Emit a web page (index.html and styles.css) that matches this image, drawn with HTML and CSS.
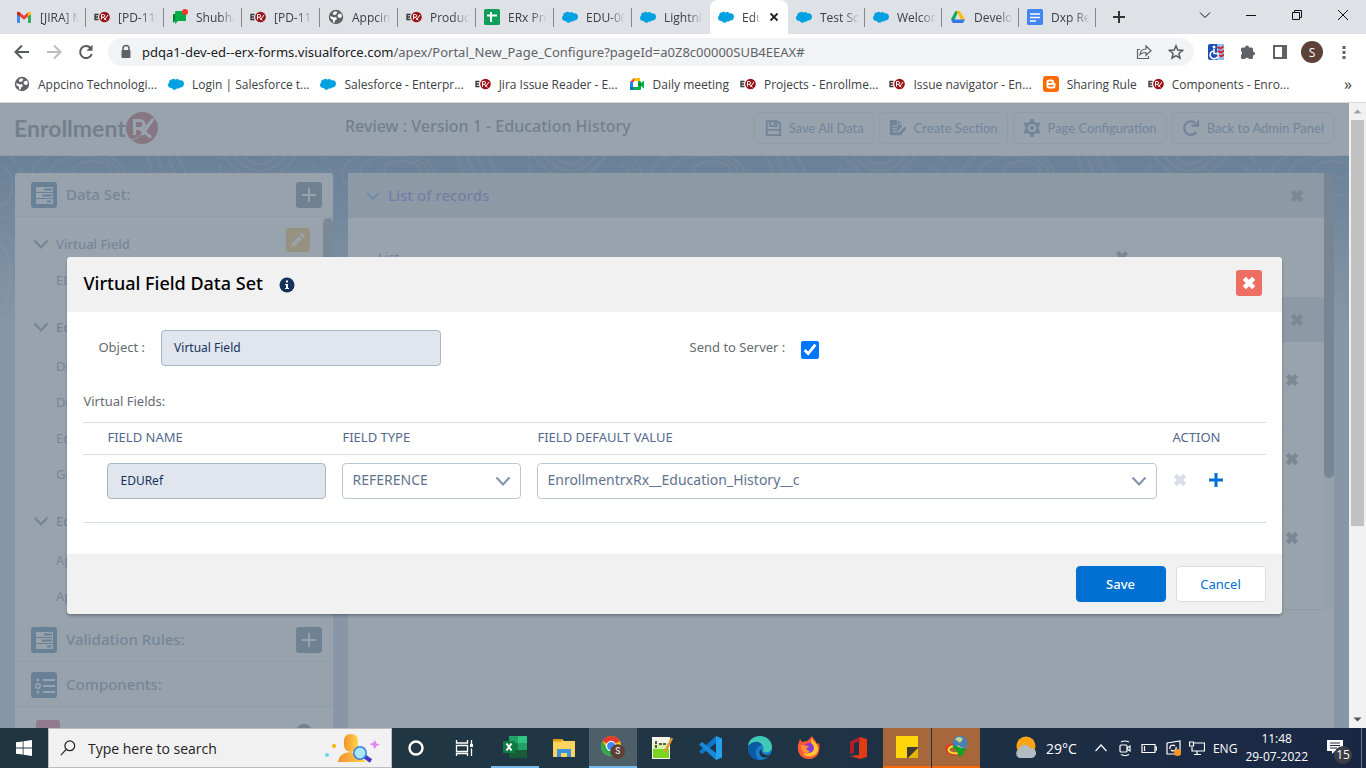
FILE: index.html
```html
<!DOCTYPE html>
<html lang="en">

<head>
    <meta charset="UTF-8" />
    <title>Education History</title>
    <link rel="stylesheet" href="styles.css">
</head>

<body>
    <!-- shared icons -->
    <svg class="sprite" aria-hidden="true">
        <symbol id="i-cloud" viewBox="0 0 16 16">
            <path fill="#00a1e0" d="M3.9 3.6C5 2.4 6.700 2.700 7.400 3.700 8.900 2.300 11 3 11.600 4.500 14 3.700 16 5.400 16 7.800s-2 4-4.200 3.600c-.8 1.300-2.200 1.400-3.100 1-.9 1.800-4 1.800-4.900-.3C1.800 12.300 0 11 0 9.100c0-1.100.6-2 1.300-2.500C.8 5.200 2 3.400 3.900 3.600z" />
        </symbol>
        <symbol id="i-erx" viewBox="0 0 16 16">
            <path d="M4.500 5.500H1v5h3.500M1 8h3" fill="none" stroke="#333" stroke-width="1.300" />
            <circle cx="10.500" cy="8" r="5.300" fill="#9b1419" />
            <path d="M7.500 10.500v-5h1.800a1.300 1.300 0 0 1 0 2.700H7.500m1.500 0 3.500 3M14 6 10.500 10.800" fill="none" stroke="#fff" stroke-width="1" />
        </symbol>
        <symbol id="i-globe" viewBox="0 0 16 16">
            <circle cx="8" cy="8" r="7.200" fill="#5f6368" />
            <path fill="#fff" d="M2.500 7 6 8.500 8 8l1 2-2 1.500-.5 2.200-1.500-.5V11L2.300 9zM7 2.200 9.500 3 8 5.500 5.500 6 4.800 4zM10 5.500l3-1 1 3-1.500 1.500-2-.5-1-1.500z" />
        </symbol>
        <symbol id="i-gmail" viewBox="0 0 16 16">
            <path fill="#4285f4" d="M1 4.500V13a1 1 0 0 0 1 1h2V6.500z" />
            <path fill="#34a853" d="M12 6.500V14h2a1 1 0 0 0 1-1V4.500z" />
            <path fill="#ea4335" d="M4 3.600 8 6.700l4-3.100v4L8 10.700 4 7.600z" />
            <path fill="#c5221f" d="M1 4.200C1 2.700 2.600 2.400 4 3.600v4L1 5.400z" />
            <path fill="#fbbc04" d="M15 4.200c0-1.500-1.600-1.800-3-.6v4l3-2.200z" />
        </symbol>
        <symbol id="i-chat" viewBox="0 0 16 16">
            <path fill="#00832d" d="M1 5h5v6H4L1 14z" />
            <path fill="#00ac47" d="M4 2h10v10H6l-3 3V3a1 1 0 0 1 1-1z" />
            <circle cx="13" cy="3" r="3" fill="#f0372d" />
        </symbol>
        <symbol id="i-sheets" viewBox="0 0 16 16">
            <rect width="16" height="16" rx="1.500" fill="#0f9d58" />
            <path d="M7 3v10M3 6.500h10" stroke="#fff" stroke-width="2" />
        </symbol>
        <symbol id="i-drive" viewBox="0 0 16 16">
            <path fill="#0fa958" d="M5.500 2h3L3.800 12.500 1 10z" />
            <path fill="#ffba00" d="M6.500 2h3.200L15 10.500h-4z" />
            <path fill="#3777e3" d="M3.500 10.500H15L13 14H2.800L1 10.800z" />
        </symbol>
        <symbol id="i-docs" viewBox="0 0 16 16">
            <rect width="16" height="16" rx="1.500" fill="#4285f4" />
            <path d="M3 5h10M3 8.500h10M3 12h6" stroke="#fff" stroke-width="1.600" />
        </symbol>
        <symbol id="i-meet" viewBox="0 0 16 16">
            <path fill="#fbbc04" d="M5 2h6v3H5z" />
            <path fill="#ea4335" d="M1 6l4-4v4z" />
            <path fill="#2684fc" d="M1 6h3v5H1z" />
            <path fill="#0066da" d="M1 11h3v3H2a1 1 0 0 1-1-1z" />
            <path fill="#00ac47" d="M4 11h5V5h2a1 1 0 0 1 1 1v1l3-2.500v8L12 10v3a1 1 0 0 1-1 1H4z" />
            <path fill="#00832d" d="m12 6.500-3 2 3 2z" />
        </symbol>
        <symbol id="i-blogger" viewBox="0 0 16 16">
            <rect width="16" height="16" rx="3" fill="#ff6a00" />
            <path fill="#fff" d="M3.500 6A2.500 2.500 0 0 1 6 3.500h2.500A2.500 2.500 0 0 1 11 6c0 1 .3 1.200 1.500 1.300v2.700a2.500 2.500 0 0 1-2.500 2.500H6A2.500 2.500 0 0 1 3.500 10z" />
            <path d="M6 6.300h2.300M6 9.700h4" stroke="#ff6a00" stroke-width="1.400" stroke-linecap="round" />
        </symbol>
        <symbol id="i-x" viewBox="0 0 12 12">
            <path d="M2 2l8 8M10 2l-8 8" stroke="currentColor" stroke-width="3.800" />
        </symbol>
        <symbol id="i-chev" viewBox="0 0 16 16">
            <path d="M1.500 4.500 8 11.500l6.500-7" fill="none" stroke="currentColor" stroke-width="2.200" />
        </symbol>
        <symbol id="i-server" viewBox="0 0 26 26">
            <rect width="26" height="26" rx="3" fill="#16588e" />
            <path d="M5 7.500h17M5 13.500h17M5 19.500h17" stroke="#fff" stroke-width="5" />
            <path d="M13 7.500h8M11 13.500h10M16 19.500h4" stroke="#16588e" stroke-width="2" />
        </symbol>
        <symbol id="i-plus" viewBox="0 0 26 26">
            <rect width="26" height="26" rx="3" fill="#3b5578" />
            <path d="M13 6v14M6 13h14" stroke="#fff" stroke-width="2" />
        </symbol>
    </svg>

    <div class="tabstrip">
        <div class="tab"><svg><use href="#i-gmail" /></svg><span>[JIRA] Mentioned</span></div>
        <div class="tab"><svg><use href="#i-erx" /></svg><span>[PD-1101]</span></div>
        <div class="tab"><svg><use href="#i-chat" /></svg><span>Shubham</span></div>
        <div class="tab"><svg><use href="#i-erx" /></svg><span>[PD-1171]</span></div>
        <div class="tab"><svg><use href="#i-globe" /></svg><span>Appcino</span></div>
        <div class="tab"><svg><use href="#i-erx" /></svg><span>Product</span></div>
        <div class="tab"><svg><use href="#i-sheets" /></svg><span>ERx Product</span></div>
        <div class="tab"><svg><use href="#i-cloud" /></svg><span>EDU-0001</span></div>
        <div class="tab no-line"><svg><use href="#i-cloud" /></svg><span>Lightning</span></div>
        <div class="tab active"><svg><use href="#i-cloud" /></svg><span>Education</span>
            <button class="tab-close" aria-label="Close tab"><svg viewBox="0 0 10 10"><path d="M1.500 1.500l7 7M8.500 1.500l-7 7" stroke="#222" stroke-width="1.800" /></svg></button>
        </div>
        <div class="tab"><svg><use href="#i-cloud" /></svg><span>Test Score</span></div>
        <div class="tab"><svg><use href="#i-cloud" /></svg><span>Welcome</span></div>
        <div class="tab"><svg><use href="#i-drive" /></svg><span>Develop</span></div>
        <div class="tab"><svg><use href="#i-docs" /></svg><span>Dxp Release</span></div>
        <button class="new-tab" aria-label="New tab"><svg viewBox="0 0 12 12"><path d="M6 0v12M0 6h12" stroke="#333" stroke-width="2" /></svg></button>
        <div class="window-controls">
            <button aria-label="Tab search"><svg viewBox="0 0 12 12"><path d="M1 3.500 6 8.500l5-5" /></svg></button>
            <button aria-label="Minimize"><svg viewBox="0 0 12 12"><path d="M1 6.500h10" /></svg></button>
            <button aria-label="Restore"><svg viewBox="0 0 12 12"><path d="M1.500 3.500h7v7h-7zM3.500 3.500v-2h7v7h-2" /></svg></button>
            <button aria-label="Close"><svg viewBox="0 0 12 12"><path d="M1 1l10 10M11 1 1 11" /></svg></button>
        </div>
    </div>

    <div class="toolbar">
        <button aria-label="Back"><svg viewBox="0 0 16 16"><path d="M15 8H2M8 1.500 1.500 8 8 14.500" fill="none" stroke="#555a5f" stroke-width="2" /></svg></button>
        <button aria-label="Forward"><svg viewBox="0 0 16 16"><path d="M1 8h13M8 1.500 14.500 8 8 14.500" fill="none" stroke="#babcbe" stroke-width="2" /></svg></button>
        <button aria-label="Reload"><svg viewBox="0 0 16 16"><path d="M13.800 10A6 6 0 1 1 12.500 4" fill="none" stroke="#555a5f" stroke-width="2" /><path d="M14.500.8v6h-6z" fill="#555a5f" /></svg></button>
        <div class="omnibox">
            <svg class="lock" viewBox="0 0 12 16"><path d="M3 7V4.500a3 3 0 0 1 6 0V7" fill="none" stroke="#5f6368" stroke-width="1.500" /><rect x="1.500" y="6" width="9" height="8" rx="1" fill="#5f6368" /></svg>
            <div class="url"><b>pdqa1-dev-ed--erx-forms.visualforce.com</b>/apex/Portal_New_Page_Configure?pageId=a0Z8c00000SUB4EEAX#</div>
            <svg viewBox="0 0 16 16"><path d="M4 5.500H1.500v9h11V12M4 10.500c.5-4 3-5.500 6-5.500V2l5 4.800-5 4.500V8.500c-3 0-4.500.5-6 2z" fill="none" stroke="#5f6368" stroke-width="1.200" /></svg>
            <svg viewBox="0 0 16 16"><path d="M8 1.800l1.800 4.300 4.700.4-3.600 3 1.100 4.600L8 11.700l-4 2.400 1.100-4.600-3.600-3 4.700-.4z" fill="none" stroke="#555a5f" stroke-width="1.500" /></svg>
        </div>
        <button aria-label="Accessibility extension"><svg viewBox="0 0 16 16"><rect width="16" height="16" rx="2" fill="#1c4fb5" /><path d="M9 0h5a2 2 0 0 1 2 2v12a2 2 0 0 1-2 2H9z" fill="#8cc4f5" /><circle cx="6" cy="3" r="1.500" fill="#fff" /><path d="M6 5v4.500h4l1.500 4M5 7a4 4 0 1 0 4.500 6" fill="none" stroke="#fff" stroke-width="1.600" /><path d="M9.500 3l3 1.500 3-2M10 7l3 1.500 3-2M11 11l2 1.500 3-2" fill="none" stroke="#dc2430" stroke-width="2" /></svg></button>
        <button aria-label="Extensions"><svg viewBox="0 0 16 16"><path d="M1 5a1.500 1.500 0 0 1 1.500-1.500H5a2 2 0 1 1 4 0h2.500A1.500 1.500 0 0 1 13 5v2.500a2 2 0 1 1 0 4V13.500A1.500 1.500 0 0 1 11.500 15H9a2.200 2.200 0 0 0-4 0H2.500A1.500 1.500 0 0 1 1 13.500V11a2.200 2.200 0 0 0 0-3.800z" fill="#5f6368" /></svg></button>
        <button aria-label="Side panel"><svg viewBox="0 0 16 16"><path d="M2 2h12v12H2z" fill="none" stroke="#5f6368" stroke-width="2" /><path d="M10 2h4v12h-4z" fill="#5f6368" /></svg></button>
        <button class="avatar" aria-label="Profile">S</button>
        <button class="dots" aria-label="Menu"><svg viewBox="0 0 16 16"><path d="M6.500 2h3v3h-3zM6.500 7h3v3h-3zM6.500 12h3v3h-3z" fill="#5f6368" /></svg></button>
    </div>

    <nav class="bookmarks">
        <a href="#"><svg><use href="#i-globe" /></svg><span>Appcino Technologi...</span></a>
        <a href="#"><svg><use href="#i-cloud" /></svg><span>Login | Salesforce t...</span></a>
        <a href="#"><svg><use href="#i-cloud" /></svg><span>Salesforce - Enterpr...</span></a>
        <a href="#"><svg><use href="#i-erx" /></svg><span>Jira Issue Reader - E...</span></a>
        <a href="#"><svg><use href="#i-meet" /></svg><span>Daily meeting</span></a>
        <a href="#"><svg><use href="#i-erx" /></svg><span>Projects - Enrollme...</span></a>
        <a href="#"><svg><use href="#i-erx" /></svg><span>Issue navigator - En...</span></a>
        <a href="#"><svg><use href="#i-blogger" /></svg><span>Sharing Rule</span></a>
        <a href="#"><svg><use href="#i-erx" /></svg><span>Components - Enro...</span></a>
        <button class="more" aria-label="More bookmarks">»</button>
    </nav>

    <div class="viewport">
        <div class="page">
            <header class="app-header">
                <div class="logo"><span>Enrollment</span><svg viewBox="0 0 32 32"><circle cx="16" cy="16" r="16" fill="#a3262e" /><path d="M8.500 23V8.500h5.500a4 4 0 0 1 0 8H9M14 16.500l11 9M27 7 16 23M20 13l2 3" fill="none" stroke="#fff" stroke-width="3" /><path d="M3 27C9 29 14 25 18 18S25 6 29 7" fill="none" stroke="#fff" stroke-width="1" /></svg></div>
                <h1>Review : Version 1 - Education History</h1>
                <div class="app-actions">
                    <button><svg viewBox="0 0 20 20"><path d="M3 2.500h12l3 3v12.500H3zM6.500 3v5h7.500V3" fill="none" stroke="currentColor" stroke-width="2" /><path d="M3 11h15v2H3zM11 3h2v4h-2z" fill="currentColor" /></svg>Save All Data</button>
                    <button><svg viewBox="0 0 20 20"><path d="M1 1h8v5h5v3l-4 4v2l2 1 2-1v3H1z" fill="currentColor" /><path d="M10 1l4 4h-4z" fill="currentColor" /><path d="M4 8h6M4 11h5M4 14h5" stroke="#fff" stroke-width="1.300" /><path d="M18.500 9.500 12 16.500" stroke="currentColor" stroke-width="3" /></svg>Create Section</button>
                    <button><svg viewBox="0 0 20 20"><circle cx="10" cy="10" r="6" fill="none" stroke="currentColor" stroke-width="3" /><circle cx="10" cy="10" r="2.500" fill="currentColor" /><path d="M10 0v4M10 16v4M1.300 5l3.500 2M15.200 13l3.500 2M1.300 15l3.500-2M15.200 7l3.500-2" stroke="currentColor" stroke-width="4" /></svg>Page Configuration</button>
                    <button><svg viewBox="0 0 20 20"><path d="M16 14.500A7.500 7.500 0 1 1 15 4.500" fill="none" stroke="currentColor" stroke-width="2.600" /><path d="M19 0v8.500h-8.500V6H15z" fill="currentColor" /></svg>Back to Admin Panel</button>
                </div>
            </header>

            <div class="workspace">
                <svg class="topo" aria-hidden="true">
                    <defs>
                        <pattern id="topo" width="310" height="180" patternUnits="userSpaceOnUse">
                            <g fill="none" stroke="#fff" stroke-opacity=".16" stroke-width="2">
                                <ellipse cx="78" cy="18" rx="46" ry="24" />
                                <ellipse cx="84" cy="16" rx="34" ry="16" />
                                <ellipse cx="92" cy="14" rx="18" ry="9" />
                                <ellipse cx="0" cy="30" rx="12" ry="20" />
                                <ellipse cx="0" cy="30" rx="24" ry="32" stroke-dasharray="8 4" />
                                <ellipse cx="0" cy="120" rx="10" ry="30" />
                                <ellipse cx="0" cy="120" rx="20" ry="44" />
                                <ellipse cx="310" cy="120" rx="10" ry="30" />
                                <ellipse cx="310" cy="120" rx="20" ry="44" />
                                <path d="M145-5l16 45M155-5l18 45M165-5l20 45M175-5l22 45" />
                                <path d="M230-5q30 40 60 0M240-5q20 26 40 0M220-5q40 56 80 0" />
                                <path d="M210 30q15-14 8-35" stroke-dasharray="10 5" />
                            </g>
                        </pattern>
                    </defs>
                    <rect width="100%" height="180" fill="url(#topo)" />
                </svg>

                <aside class="sidebar">
                    <div class="side-head"><svg><use href="#i-server" /></svg><h2>Data Set:</h2><button aria-label="Add data set"><svg><use href="#i-plus" /></svg></button></div>
                    <div class="side-body">
                        <div class="tree">
                            <div class="tree-group"><svg><use href="#i-chev" /></svg>Virtual Field
                                <button class="edit" aria-label="Edit"><svg viewBox="0 0 16 16"><path d="M1 15l1-4 7-7 3 3-7 7zM10 3l1.500-1.500a1 1 0 0 1 1.500 0l1.500 1.500a1 1 0 0 1 0 1.500L13 6z" fill="#fff" /></svg></button>
                            </div>
                            <ul>
                                <li>EDURef</li>
                            </ul>
                            <div class="tree-group"><svg><use href="#i-chev" /></svg>Education</div>
                            <ul>
                                <li>Degree</li>
                                <li>Degree</li>
                                <li>Education</li>
                                <li>GPA</li>
                            </ul>
                            <div class="tree-group"><svg><use href="#i-chev" /></svg>Education</div>
                            <ul>
                                <li>Applicant</li>
                                <li>Application</li>
                            </ul>
                        </div>
                        <div class="side-scroll"><div></div></div>
                    </div>
                    <div class="side-head"><svg><use href="#i-server" /></svg><h2>Validation Rules:</h2><button aria-label="Add rule"><svg><use href="#i-plus" /></svg></button></div>
                    <div class="side-head"><svg viewBox="0 0 26 26"><rect width="26" height="26" rx="3" fill="#16588e" /><path d="M12 8h12M12 14h12M12 20h12" stroke="#fff" stroke-width="2" /><circle cx="7" cy="8" r="1.500" fill="#fff" /><circle cx="7" cy="14" r="2.200" fill="none" stroke="#fff" stroke-width="1.500" /><circle cx="7" cy="20" r="1.500" fill="#fff" /></svg><h2>Components:</h2></div>
                    <div class="component"><span class="pink"></span><span class="dot"></span></div>
                </aside>

                <main class="records">
                    <div class="records-list">
                        <section>
                            <div class="section-head"><svg><use href="#i-chev" /></svg><h2>List of records</h2><button aria-label="Remove"><svg><use href="#i-x" /></svg></button></div>
                            <div class="list-row"><span>List</span><button aria-label="Remove"><svg><use href="#i-x" /></svg></button></div>
                        </section>
                        <section>
                            <div class="section-head"><button aria-label="Remove"><svg><use href="#i-x" /></svg></button></div>
                            <div class="section-rows">
                                <div class="section-row"><button aria-label="Remove"><svg><use href="#i-x" /></svg></button></div>
                                <div class="section-row"><button aria-label="Remove"><svg><use href="#i-x" /></svg></button></div>
                                <div class="section-row"><button aria-label="Remove"><svg><use href="#i-x" /></svg></button></div>
                            </div>
                        </section>
                    </div>
                    <div class="records-scroll"><div></div></div>
                </main>
            </div>

            <div class="backdrop">
                <div class="modal" role="dialog" aria-labelledby="modal-title">
                    <div class="modal-head">
                        <h2 id="modal-title">Virtual Field Data Set</h2>
                        <svg class="info" viewBox="0 0 16 16"><circle cx="8" cy="8" r="7.500" fill="#16325c" /><path d="M7 3.500h2v2H7zM6 7h3v4h1v1H6v-1h1V8H6z" fill="#fff" /></svg>
                        <button class="close" aria-label="Close"><svg><use href="#i-x" /></svg></button>
                    </div>
                    <div class="modal-body">
                        <div class="fields">
                            <div class="field">
                                <label for="object">Object :</label>
                                <input type="text" id="object" value="Virtual Field" readonly>
                            </div>
                            <div class="field">
                                <label for="send">Send to Server :</label>
                                <input type="checkbox" id="send" checked>
                            </div>
                        </div>
                        <p class="caption">Virtual Fields:</p>
                        <table>
                            <thead>
                                <tr>
                                    <th class="col-name">FIELD NAME</th>
                                    <th class="col-type">FIELD TYPE</th>
                                    <th>FIELD DEFAULT VALUE</th>
                                    <th class="col-action">ACTION</th>
                                </tr>
                            </thead>
                            <tbody>
                                <tr>
                                    <td class="col-name"><input type="text" value="EDURef" aria-label="Field name" readonly></td>
                                    <td>
                                        <div class="select"><select aria-label="Field type"><option>REFERENCE</option></select><svg><use href="#i-chev" /></svg></div>
                                    </td>
                                    <td>
                                        <div class="select"><select aria-label="Field default value"><option>EnrollmentrxRx__Education_History__c</option></select><svg><use href="#i-chev" /></svg></div>
                                    </td>
                                    <td>
                                        <div class="row-actions">
                                            <button class="remove" aria-label="Remove row"><svg><use href="#i-x" /></svg></button>
                                            <button class="add" aria-label="Add row"><svg viewBox="0 0 14 14"><path d="M7 0v14M0 7h14" stroke="currentColor" stroke-width="3" /></svg></button>
                                        </div>
                                    </td>
                                </tr>
                            </tbody>
                        </table>
                    </div>
                    <div class="modal-foot">
                        <button class="save">Save</button>
                        <button class="cancel">Cancel</button>
                    </div>
                </div>
            </div>
        </div>
        <div class="scrollbar">
            <svg viewBox="0 0 17 17"><path d="M4.500 10.500h8l-4-4z" fill="#a3a3a3" /></svg>
            <div class="thumb"></div>
            <svg viewBox="0 0 17 17"><path d="M4.500 6.500h8l-4 4z" fill="#505050" /></svg>
        </div>
    </div>

    <footer class="taskbar">
        <button class="start" aria-label="Start"><svg viewBox="0 0 16 16"><path d="M0 2.300 6.700 1.400v6.200H0zM7.500 1.200 16 0v7.600H7.500zM0 8.400h6.700v6.200L0 13.700zM7.500 8.400H16V16l-8.500-1.200z" fill="#fff" /></svg></button>
        <div class="search">
            <svg viewBox="0 0 18 18"><circle cx="11" cy="6.500" r="5.500" fill="none" stroke="#222" stroke-width="1.400" /><path d="M7 10.500 1 17" stroke="#222" stroke-width="1.400" /></svg>
            <input type="text" placeholder="Type here to search" aria-label="Search">
            <svg class="person" viewBox="0 0 56 30">
                <defs><linearGradient id="skin"><stop offset="0" stop-color="#f2922c" /><stop offset="1" stop-color="#ffd54a" /></linearGradient></defs>
                <circle cx="3" cy="22" r="2" fill="#67d5ef" /><circle cx="10" cy="13" r="2" fill="#ffb300" />
                <path d="M14 29q1-9 12-10l8 2 8 8z" fill="url(#skin)" /><path d="M20 8q0-7 7-7t7 7v4q0 6-7 7-7-1-7-7z" fill="url(#skin)" />
                <path d="m40 23 7 5" stroke="#4338c9" stroke-width="4" /><circle cx="36" cy="20" r="6.200" fill="#a8e6f9" stroke="#3c7ee0" stroke-width="1.500" />
                <path d="m51 7 1.500 3.500 3.500 1-3.500 1.500-2 3-1.500-3.500-3.500-1.500 3.500-1z" fill="#df83f7" />
            </svg>
        </div>
        <button aria-label="Cortana"><svg viewBox="0 0 24 24"><circle cx="12" cy="12" r="6.500" fill="none" stroke="#fff" stroke-width="2.400" /></svg></button>
        <button aria-label="Task view"><svg viewBox="0 0 24 24"><path d="M4.500 4v3h11V4M4.500 9.500h11v6h-11zM4.500 20v-2.500h11V20M19.500 4v4M19.500 12.500V20" fill="none" stroke="#fff" stroke-width="1.300" /><path d="M18 8h3v3h-3z" fill="#fff" /></svg></button>
        <div class="apps">
            <button class="open" aria-label="Excel"><svg viewBox="0 0 24 24"><path d="M6 1h18v22H6z" fill="#21a366" /><path d="M15 1h9v7h-9z" fill="#33c481" /><path d="M6 8h9v7H6z" fill="#107c41" /><path d="M6 15h18v8H6z" fill="#185c37" /><path d="M0 6h12v12H0z" fill="#107c41" /><path d="m3.500 8.500 5 7M8.500 8.500l-5 7" stroke="#fff" stroke-width="2" /></svg></button>
            <button aria-label="File Explorer"><svg viewBox="0 0 24 24"><path d="M1 3h9l2 2h11v16H1z" fill="#ffd45e" /><path d="M1 3h9v2.500H1z" fill="#e19a00" /><path d="M5 21v-8h14v8h-4v-4H9v4z" fill="#3b93dc" /></svg></button>
            <button class="open current" aria-label="Chrome"><svg viewBox="0 0 26 26"><circle cx="11" cy="12" r="11" fill="#fbc116" /><path d="M11 12 1.500 6.500A11 11 0 0 1 20.500 6.500z" fill="#e33b2e" /><path d="M1.500 6.500A11 11 0 0 0 11 23l4.500-8.500L6 14z" fill="#2da94f" /><circle cx="11" cy="12" r="5" fill="#4285f4" stroke="#fff" stroke-width="1.300" /><circle cx="18" cy="18" r="8" fill="#5d4037" /><text x="18" y="21" text-anchor="middle" font-size="9" font-family="Roboto, sans-serif" fill="#fff">S</text></svg></button>
            <button aria-label="Notepad++"><svg viewBox="0 0 24 24"><path d="M2 1h18v22H2z" fill="#f5f5e8" /><path d="M3 12h16v10H3z" fill="#7dd321" /><path d="M3 7h16v6H3z" fill="#d7f0a8" /><path d="M6 5v8M9 8h8" stroke="#333" stroke-width="1.600" stroke-dasharray="3 1" /><path d="M22 2l-7 14" stroke="#e3962d" stroke-width="2.500" /></svg></button>
            <button aria-label="Visual Studio Code"><svg viewBox="0 0 24 24"><path d="M17 0l6 2.500v19L17 24z" fill="#24a1ec" /><path d="M17 0v7L3 18l-3-2.500z" fill="#0b79cb" /><path d="M17 24v-7L3 6 0 8.500z" fill="#168bdc" /></svg></button>
            <button aria-label="Edge"><svg viewBox="0 0 24 24"><circle cx="12" cy="12" r="12" fill="#1580cf" /><path d="M0 10C1-3 23-4 24 11c0 5-6 7-9 4 3-7-6-11-15-5z" fill="#41c9b5" /><path d="M0 10c5-6 13-5 14-1-6 1-9 9-3 15C4 24-1 18 0 10z" fill="#0c59a4" /><path d="M23 18q-5 3-9-1l-1-4q-4 4 1 8 5 2 9-3z" fill="#20323f" /></svg></button>
            <button aria-label="Firefox"><svg viewBox="0 0 24 24"><path d="M1 9l2-6 2 3 5-1c2-1 3-3 5-5 1 3 4 4 5 8l2-1c2 9-2 16-10 16S0 17 1 9z" fill="#ff5a36" /><path d="M14 1c2 5 8 7 7 13-1 7-12 9-15 3 6 2 9-1 9-5z" fill="#ffc62e" /><circle cx="12" cy="12" r="5" fill="#8b39d6" /><path d="M4 9l8 1-3 3 4 3c-6 3-9-2-9-7z" fill="#ff9234" /></svg></button>
            <button aria-label="Office"><svg viewBox="0 0 24 24"><path d="M14 1l7 2v18l-7 2-10-3 9-1V5L8 7v9l-4 2V6z" fill="#e03c14" /><path d="M14 1l-10 5v12l4-2V7l6-2z" fill="#b51c2b" /></svg></button>
            <button class="alert" aria-label="Sticky Notes"><svg viewBox="0 0 24 24"><path d="M1 1h22v11L12 23H1z" fill="#ffd60a" /><path d="M12 12h11v1L13 23h-1z" fill="#3d3a36" /><path d="M23 13v10H13z" fill="#e2b600" /></svg></button>
            <button class="alert" aria-label="Download Manager"><svg viewBox="0 0 24 24"><circle cx="16" cy="8" r="7.500" fill="#4a7fb5" /><path d="M11 4q4-4 8 0l-3 4zM13 10l6 3-4 2z" fill="#c8d68a" /><path d="M9 9Q0 11 3 16t12 3" fill="none" stroke="#e2382c" stroke-width="2" /><path d="M9 11q-6 2-4 5t10 2" fill="none" stroke="#f5e12c" stroke-width="2" /><path d="M8 10 24 15l-5 1 1 3-5 3-2-6z" fill="#0aa51e" /></svg></button>
        </div>
        <div class="tray">
            <svg class="weather" viewBox="0 0 24 24"><circle cx="12" cy="10" r="9.500" fill="#ffa514" /><path d="M5 22a5 5 0 0 1 0-9 6 6 0 0 1 11-1 5 5 0 1 1 2 10z" fill="#b2bac2" /></svg>
            <span class="temp">29°C</span>
            <svg viewBox="0 0 16 16"><path d="M2.500 11 8 5l5.500 6" /></svg>
            <svg viewBox="0 0 16 16"><rect x="3" y="5" width="7" height="7" rx="1" /><path d="m10 8 3-2v5l-3-2M4 2q4-2 8 0M4 14.500q4 2 8 0" /></svg>
            <svg viewBox="0 0 16 16"><path d="M1 4.500h13v8H1zM14 7h1.500v3H14M3.500 6v5" /></svg>
            <svg viewBox="0 0 16 16"><path d="M2 3l13-2v13H2zM5 9a3 3 0 0 1 5-3M11 7a3 3 0 0 1-5 3" /><circle cx="12.500" cy="12.500" r="3.500" fill="#f7941d" stroke="none" /></svg>
            <svg viewBox="0 0 16 16"><path d="M5 3h10.500v8H3V7M8 11v3.500M5 14.500h7M.5 2h4v4h-4z" /></svg>
            <span class="lang">ENG</span>
            <div class="clock">11:48<br>29-07-2022</div>
            <button class="notice" aria-label="Notifications"><svg viewBox="0 0 18 16"><path d="M1 1h16v11H9l-3 3v-3H1z" fill="#fff" stroke="none" /><path d="M4 4h10M4 6.500h10M4 9h7" stroke="#1c2b40" /></svg><span>15</span></button>
        </div>
    </footer>
</body>

</html>
```
FILE: styles.css
```css
* {
    box-sizing: border-box;
}

body {
    margin: 0;
    height: 100vh;
    display: flex;
    flex-direction: column;
    overflow: hidden;
    font-family: "Open Sans", sans-serif;
    font-size: 12px;
    color: #3c4043;
}

button {
    font: inherit;
    color: inherit;
    padding: 0;
    border: none;
    background: none;
    display: flex;
    align-items: center;
    justify-content: center;
    cursor: pointer;
}

svg {
    width: 16px;
    height: 16px;
    flex: none;
}

h1,
h2,
p,
ul {
    margin: 0;
    padding: 0;
    list-style: none;
}

.sprite {
    position: absolute;
    width: 0;
    height: 0;
}

/* browser */
.tabstrip {
    display: flex;
    height: 34px;
    padding-left: 8px;
    background: #dee1e6;
}

.tab {
    display: flex;
    align-items: center;
    gap: 8px;
    width: 78px;
    padding-left: 8px;
    position: relative;
}

.tab::after {
    content: "";
    position: absolute;
    right: 0;
    top: 8px;
    width: 1px;
    height: 19px;
    background: #85888c;
}

.tab.active::after,
.tab.no-line::after {
    display: none;
}

.tab span {
    width: 39px;
    overflow: hidden;
    white-space: nowrap;
    mask-image: linear-gradient(to right, #000 60%, transparent);
}

.tab.active {
    background: #fff;
    border-radius: 8px 8px 0 0;
}

.tab.active span {
    width: 19px;
}

.tab.active ~ .tab {
    width: 77px;
}

.tab-close svg {
    width: 10px;
    height: 10px;
}

.new-tab {
    width: 46px;
}

.new-tab svg {
    width: 12px;
    height: 12px;
}

.window-controls {
    display: flex;
    margin-left: auto;
}

.window-controls button {
    width: 46px;
    height: 29px;
}

.window-controls svg {
    width: 12px;
    height: 12px;
    fill: none;
    stroke: #111;
}

.toolbar {
    display: flex;
    align-items: center;
    height: 36px;
    padding: 0 6px;
    background: #fff;
}

.toolbar button {
    width: 32px;
    height: 28px;
}

.omnibox {
    display: flex;
    align-items: center;
    gap: 16px;
    flex: 1;
    height: 28px;
    margin: 0 6px;
    padding: 0 10px 0 12px;
    border-radius: 14px;
    background: #f1f3f4;
}

.lock {
    width: 12px;
}

.url {
    flex: 1;
    margin-left: -6px;
    font-family: "Noto Sans", sans-serif;
    font-size: 13px;
    color: #5f6368;
    white-space: nowrap;
}

.url b {
    font-weight: normal;
    color: #202124;
}

.toolbar .avatar {
    width: 22px;
    height: 22px;
    margin: 0 5px;
    border-radius: 50%;
    background: #5d4037;
    color: #fff;
}

.bookmarks {
    display: flex;
    align-items: center;
    gap: 11px;
    height: 33px;
    padding: 0 14px 4px;
    background: #fff;
    border-bottom: 1px solid #d5d7da;
}

.bookmarks a {
    display: flex;
    align-items: center;
    gap: 8px;
    color: inherit;
    text-decoration: none;
    white-space: nowrap;
}

.more {
    margin-left: auto;
    font-size: 16px;
}

.viewport {
    display: flex;
    flex: 1;
    min-height: 0;
}

.page {
    position: relative;
    display: flex;
    flex-direction: column;
    flex: 1;
    overflow: hidden;
    background: #b0c4df;
    font-family: "Noto Sans", sans-serif;
    font-size: 13px;
    color: #54698d;
}

.scrollbar {
    display: flex;
    flex-direction: column;
    width: 17px;
    background: #f1f1f1;
}

.scrollbar svg {
    width: 17px;
    height: 17px;
}

.thumb {
    height: 65%;
    margin: 0 2px auto;
    background: #c1c1c1;
}

/* app header */
.app-header {
    display: flex;
    align-items: center;
    height: 53px;
    padding: 0 15px 2px 14px;
    background: #fff;
    border-bottom: 1px solid #d8dde6;
}

.logo {
    display: flex;
    align-items: center;
    width: 331px;
    font-family: Lato, sans-serif;
    font-size: 23px;
    font-weight: bold;
    color: #4d4d4f;
}

.logo svg {
    width: 32px;
    height: 32px;
}

h1 {
    font-size: 16px;
    font-weight: 500;
    margin-bottom: 4px;
    color: #3e4a5b;
}

.app-actions {
    display: flex;
    gap: 5px;
    margin-left: auto;
    font-family: Lato, sans-serif;
    color: #3d67a0;
}

.app-actions button {
    gap: 7px;
    height: 32px;
    padding: 0 9px;
    border: 1px solid #d8dde6;
    border-radius: 4px;
    white-space: nowrap;
}

.app-actions svg {
    width: 18px;
    height: 18px;
}

.workspace {
    position: relative;
    display: flex;
    flex: 1;
    gap: 15px;
    padding: 17px 15px 0;
    min-height: 0;
    background: linear-gradient(#195594, #b0c4df 180px);
}

.topo {
    position: absolute;
    top: 0;
    left: 0;
    width: 100%;
    height: 180px;
}

.sidebar {
    position: relative;
    width: 318px;
    flex: none;
    border-radius: 4px 4px 0 0;
    overflow: hidden;
    background: #fff;
}

.side-head {
    display: flex;
    align-items: center;
    gap: 9px;
    height: 44px;
    padding: 0 11px 0 16px;
    border-bottom: 1px solid #dbe1e8;
    background: #f7f9fb;
    margin-bottom: 1px;
}

.side-head svg {
    width: 26px;
    height: 26px;
}

.side-head button {
    margin-left: auto;
}

.side-head h2,
.section-head h2 {
    font-size: 15px;
    font-weight: 500;
    padding-bottom: 2px;
}

.side-body {
    display: flex;
    height: 400px;
}

.tree {
    flex: 1;
    padding: 8px 14px 0 18px;
}

.tree-group {
    display: flex;
    align-items: center;
    gap: 7px;
    height: 36px;
    font-weight: 500;
}

.tree-group .edit {
    width: 24px;
    height: 24px;
    margin: 0 -1px 8px auto;
    border-radius: 3px;
    background: #f4a623;
}

.tree ul {
    padding: 3px 0 11px;
}

.tree ul:first-of-type {
    padding-top: 0;
}

.tree li {
    height: 36px;
    padding-left: 23px;
    line-height: 36px;
}

.side-scroll {
    width: 10px;
    background: #e8edf3;
}

.side-scroll div {
    height: 200px;
    border-radius: 5px;
    background: #6c7a94;
}

.component {
    display: flex;
    justify-content: space-between;
    padding: 12px 21px;
}

.pink {
    width: 24px;
    height: 24px;
    border-radius: 3px;
    background: #e0315f;
}

.dot {
    width: 16px;
    height: 16px;
    margin-top: 4px;
    border-radius: 50%;
    background: #3b5578;
}

.records {
    position: relative;
    display: flex;
    align-items: flex-start;
    flex: 1;
    border-radius: 4px 4px 0 0;
    background: #fff;
}

.records-list {
    flex: 1;
    border-bottom: 1px solid #c5ccd6;
}

.section-head {
    display: flex;
    align-items: center;
    gap: 8px;
    height: 45px;
    padding: 0 20px 0 18px;
    background: #c6ccd5;
}

.section-head h2 {
    color: #4a43d6;
}

.section-head > svg {
    color: #2d86dc;
    width: 14px;
}

.records button {
    margin-left: auto;
    color: #70767e;
}

.records button svg {
    width: 14px;
    height: 14px;
}

.list-row,
.section-row {
    display: flex;
    align-items: center;
    border-bottom: 1px solid #e8ecf1;
}

.list-row {
    height: 69px;
    margin-bottom: 10px;
    padding: 9px 195px 0 30px;
}

.section-rows {
    padding: 10px 0 20px;
}

.section-row {
    height: 79px;
    padding: 0 25px 22px;
}

.records-scroll {
    width: 10px;
    height: 436px;
    background: #e8edf3;
}

.records-scroll div {
    height: 305px;
    border-radius: 0 0 5px 5px;
    background: #5f6c82;
}

/* modal */
.backdrop {
    position: absolute;
    inset: 0;
    display: flex;
    align-items: center;
    justify-content: center;
    padding-top: 40px;
    background: rgba(126, 140, 153, 0.8);
}

.modal {
    width: 90%;
    border-radius: 4px;
    overflow: hidden;
    background: #fff;
    box-shadow: 0 2px 3px rgba(0, 0, 0, 0.25);
}

.modal-head {
    display: flex;
    align-items: center;
    height: 55px;
    padding: 0 20px 3px 16px;
    background: #f1f1f1;
}

.modal-head h2 {
    font-size: 18px;
    font-weight: 500;
    color: #000;
}

.info {
    margin: 4px 0 0 16px;
}

.close {
    width: 26px;
    height: 26px;
    margin-left: auto;
    border-radius: 3px;
    background: #ef6e64;
    color: #fff;
}

.close svg {
    width: 14px;
    height: 14px;
}

.modal-body {
    padding: 18px 16px 31px;
}

.fields {
    display: flex;
    color: #666b73;
}

.field {
    display: flex;
    align-items: center;
    gap: 16px;
    flex: 1;
    padding-left: 15px;
}

.field label {
    padding-bottom: 2px;
}

.modal input[type="text"],
.modal select {
    display: block;
    width: 100%;
    height: 36px;
    padding: 0 12px 1px;
    border: 1px solid #a8b7c7;
    border-radius: 4px;
    background: #e0e5ee;
    font: inherit;
    font-size: 12px;
    color: #16325c;
}

.modal #object {
    width: 280px;
}

.field input[type="checkbox"] {
    width: 18px;
    height: 18px;
    margin: 4px 0 0;
    accent-color: #0075ff;
}

.caption {
    margin: 25px 0 11px;
    line-height: 20px;
    color: #666b73;
}

table {
    width: 100%;
    table-layout: fixed;
    border-collapse: collapse;
}

th {
    height: 32px;
    padding: 0 8px 3px;
    border: solid #d8dde6;
    border-width: 1px 0;
    text-align: left;
    font-weight: normal;
}

td {
    height: 68px;
    padding: 8px 8px 0;
    border-bottom: 1px solid #d8dde6;
    vertical-align: top;
}

.modal .col-name {
    width: 251px;
    padding-left: 24px;
}

.col-type {
    width: 195px;
}

.col-action {
    width: 101px;
}

.select {
    position: relative;
}

.modal select {
    appearance: none;
    padding: 0 9px 3px;
    background: #fff;
    border-color: #bac7d5;
    font-size: 14px;
    color: #61738f;
}

.select svg {
    position: absolute;
    right: 10px;
    top: 10px;
    color: #8496b1;
}

.row-actions {
    display: flex;
    align-items: center;
    gap: 22px;
    height: 34px;
}

.row-actions svg {
    width: 14px;
    height: 14px;
}

.remove {
    color: #d8dde6;
}

.add {
    color: #0070d2;
}

.modal-foot {
    display: flex;
    align-items: center;
    justify-content: flex-end;
    gap: 10px;
    height: 60px;
    padding: 0 16px;
    background: #f1f1f1;
}

.modal-foot button {
    width: 90px;
    height: 36px;
    border: 1px solid #d8dde6;
    border-radius: 4px;
    background: #fff;
    color: #0070d2;
}

.modal-foot .save {
    border-color: #0070d2;
    background: #0070d2;
    color: #fff;
    font-weight: 500;
}

/* taskbar */
.taskbar {
    display: flex;
    height: 40px;
    background: linear-gradient(to right, #1f3640, #203645 50%, #1a2744);
    color: #fff;
}

.taskbar > button,
.apps button {
    width: 48px;
    height: 40px;
}

.taskbar > button svg,
.apps svg {
    width: 24px;
    height: 24px;
}

.taskbar .start svg {
    width: 16px;
    height: 16px;
}

.search {
    display: flex;
    align-items: center;
    gap: 12px;
    width: 344px;
    padding: 0 11px;
    border: 1px solid #bbb;
    background: #f1f1f1;
}

.search input {
    flex: 1;
    min-width: 0;
    padding: 0;
    border: none;
    background: none;
    font: inherit;
    font-size: 14px;
}

.search input::placeholder {
    color: #222;
}

.search .person {
    width: 56px;
    height: 30px;
}

.apps {
    display: flex;
    gap: 1px;
    margin-left: 3px;
}

.apps .open {
    border-bottom: 2px solid #76b9ed;
}

.apps .current {
    background: #4d5f68;
}

.apps .alert {
    background: #a6683a;
    border-bottom: 2px solid #f76a07;
}

.tray {
    display: flex;
    align-items: center;
    gap: 8px;
    margin-left: auto;
    padding-right: 4px;
}

.tray svg {
    fill: none;
    stroke: #fff;
    stroke-width: 1.2;
}

.tray .weather {
    width: 24px;
    height: 24px;
    stroke: none;
}

.temp {
    margin-right: 8px;
    font-size: 14px;
}

.clock {
    line-height: 18px;
    text-align: center;
}

.notice {
    width: 46px;
    height: 40px;
    border-right: 1px solid #6b7789;
    position: relative;
}

.notice svg {
    width: 18px;
    margin: 0 8px 2px 0;
}

.notice span {
    position: absolute;
    left: 18px;
    top: 18px;
    width: 18px;
    height: 18px;
    border-radius: 50%;
    background: #3b3f44;
    line-height: 18px;
}
```
